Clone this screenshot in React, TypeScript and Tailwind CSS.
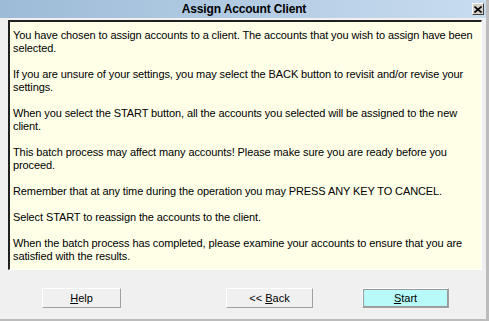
import React from "react";

const paragraphs: string[][] = [
  [
    "You have chosen to assign accounts to a client. The accounts that you wish to assign have been",
    "selected.",
  ],
  [
    "If you are unsure of your settings, you may select the BACK button to revisit and/or revise your",
    "settings.",
  ],
  [
    "When you select the START button, all the accounts you selected will be assigned to the new",
    "client.",
  ],
  [
    "This batch process may affect many accounts! Please make sure you are ready before you",
    "proceed.",
  ],
  ["Remember that at any time during the operation you may PRESS ANY KEY TO CANCEL."],
  ["Select START to reassign the accounts to the client."],
  [
    "When the batch process has completed, please examine your accounts to ensure that you are",
    "satisfied with the results.",
  ],
];

function DlgButton({
  hotkey,
  rest,
  prefix,
  primary,
  className,
}: {
  hotkey: string;
  rest: string;
  prefix?: string;
  primary?: boolean;
  className: string;
}) {
  return (
    <button
      className={`h-[20px] border border-t-white border-l-white border-r-[#a0a0a0] border-b-[#a0a0a0] bg-[#f0f0f0] flex items-center justify-center ${className}`}
    >
      <span
        className={`flex h-full w-full items-center justify-center ${
          primary ? "border border-[#9a9a9a] bg-[#b8fafa]" : ""
        }`}
      >
        <span className="whitespace-pre">
          {prefix}
          <span className="underline underline-offset-[1px]">{hotkey}</span>
          {rest}
        </span>
      </span>
    </button>
  );
}

export default function App() {
  return (
    <div
      className="w-[489px] h-[321px] overflow-hidden bg-[#f0f0f0] border-r-[3px] border-b-[2px] border-[#bcbcbc] text-black text-[11px]"
      style={{ fontFamily: '"Liberation Sans", Arial, sans-serif' }}
    >
      {/* title bar */}
      <div className="relative h-[18px] flex items-center justify-center bg-gradient-to-r from-[#9dbbd7] to-[#c8dcef]">
        <span className="font-bold text-[12px] leading-none ml-[2px] tracking-[-0.15px]">Assign Account Client</span>
        <div className="absolute right-[2px] top-[3px] w-[12px] h-[12px] border border-t-white border-l-white border-r-[#404040] border-b-[#404040] bg-[#d4d0c8] flex items-center justify-center">
          <svg width="8" height="7" viewBox="0 0 8 7">
            <path d="M0.5 0.5 L7.5 6.5 M7.5 0.5 L0.5 6.5" stroke="#000" strokeWidth="1.6" />
          </svg>
        </div>
      </div>

      {/* message panel */}
      <div className="ml-[8px] mr-[4px] mt-[2px] h-[250px] border-l-[2px] border-t-[2px] border-l-[#202020] border-t-[#202020] border-r border-b border-r-white border-b-white bg-[#ffffe8] px-[3px] pt-[7px] tracking-[-0.1px]">
        {paragraphs.map((p, i) => (
          <div key={i} className="mb-[13px]">
            {p.map((line, j) => (
              <div key={j} className="whitespace-nowrap leading-[13px]">
                {line}
              </div>
            ))}
          </div>
        ))}
      </div>

      {/* buttons */}
      <div className="flex items-center mt-[18px]">
        <DlgButton className="ml-[42px] w-[79px]" hotkey="H" rest="elp" />
        <DlgButton className="ml-[105px] w-[87px]" prefix="<< " hotkey="B" rest="ack" />
        <DlgButton className="ml-[49px] w-[87px]" hotkey="S" rest="tart" primary />
      </div>
    </div>
  );
}
